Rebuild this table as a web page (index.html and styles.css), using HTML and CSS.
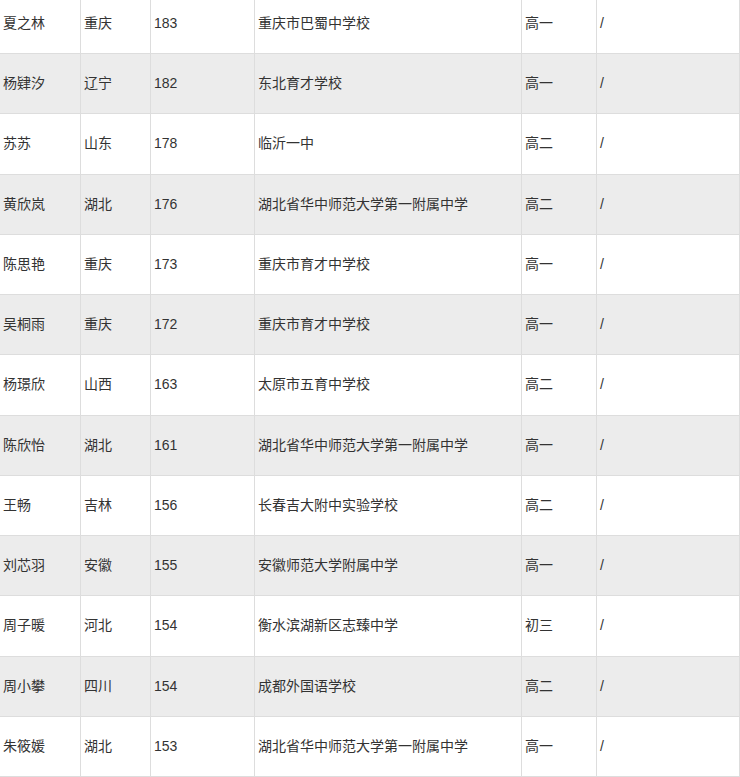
FILE: index.html
```html
<!DOCTYPE html>
<html lang="zh-CN">
<head>
<meta charset="utf-8">
<title>名单</title>
<link rel="stylesheet" href="styles.css">
</head>
<body>
<div class="wrap">
<table class="list">
<colgroup>
<col class="c-name"><col class="c-prov"><col class="c-score"><col class="c-school"><col class="c-grade"><col class="c-note">
</colgroup>
<tbody>
<tr><td>夏之林</td><td>重庆</td><td>183</td><td>重庆市巴蜀中学校</td><td>高一</td><td>/</td></tr>
<tr><td>杨肄汐</td><td>辽宁</td><td>182</td><td>东北育才学校</td><td>高一</td><td>/</td></tr>
<tr><td>苏苏</td><td>山东</td><td>178</td><td>临沂一中</td><td>高二</td><td>/</td></tr>
<tr><td>黄欣岚</td><td>湖北</td><td>176</td><td>湖北省华中师范大学第一附属中学</td><td>高二</td><td>/</td></tr>
<tr><td>陈思艳</td><td>重庆</td><td>173</td><td>重庆市育才中学校</td><td>高一</td><td>/</td></tr>
<tr><td>吴桐雨</td><td>重庆</td><td>172</td><td>重庆市育才中学校</td><td>高一</td><td>/</td></tr>
<tr><td>杨璟欣</td><td>山西</td><td>163</td><td>太原市五育中学校</td><td>高二</td><td>/</td></tr>
<tr><td>陈欣怡</td><td>湖北</td><td>161</td><td>湖北省华中师范大学第一附属中学</td><td>高一</td><td>/</td></tr>
<tr><td>王畅</td><td>吉林</td><td>156</td><td>长春吉大附中实验学校</td><td>高二</td><td>/</td></tr>
<tr><td>刘芯羽</td><td>安徽</td><td>155</td><td>安徽师范大学附属中学</td><td>高一</td><td>/</td></tr>
<tr><td>周子暖</td><td>河北</td><td>154</td><td>衡水滨湖新区志臻中学</td><td>初三</td><td>/</td></tr>
<tr><td>周小攀</td><td>四川</td><td>154</td><td>成都外国语学校</td><td>高二</td><td>/</td></tr>
<tr><td>朱筱媛</td><td>湖北</td><td>153</td><td>湖北省华中师范大学第一附属中学</td><td>高一</td><td>/</td></tr>
</tbody>
</table>
</div>
</body>
</html>
```
FILE: styles.css
```css
html, body {
  margin: 0;
  padding: 0;
  background: #fff;
}
body {
  font-family: "Liberation Sans", "Noto Sans CJK SC", sans-serif;
  font-size: 14px;
  color: #333;
  overflow: hidden;
}
.wrap {
  margin-top: -7.25px;
  margin-left: -1px;
}
.list {
  border-collapse: collapse;
  table-layout: fixed;
  width: 740px;
}
.c-name { width: 81px; }
.c-prov { width: 70px; }
.c-score { width: 104px; }
.c-school { width: 267px; }
.c-grade { width: 75px; }
.c-note { width: 143px; }
.list td {
  border: 1px solid #ddd;
  padding: 20px 3px;
  line-height: 19.25px;
  text-align: left;
  vertical-align: middle;
  white-space: nowrap;
}
.list tr:nth-child(even) td {
  background: #ececec;
}
```
